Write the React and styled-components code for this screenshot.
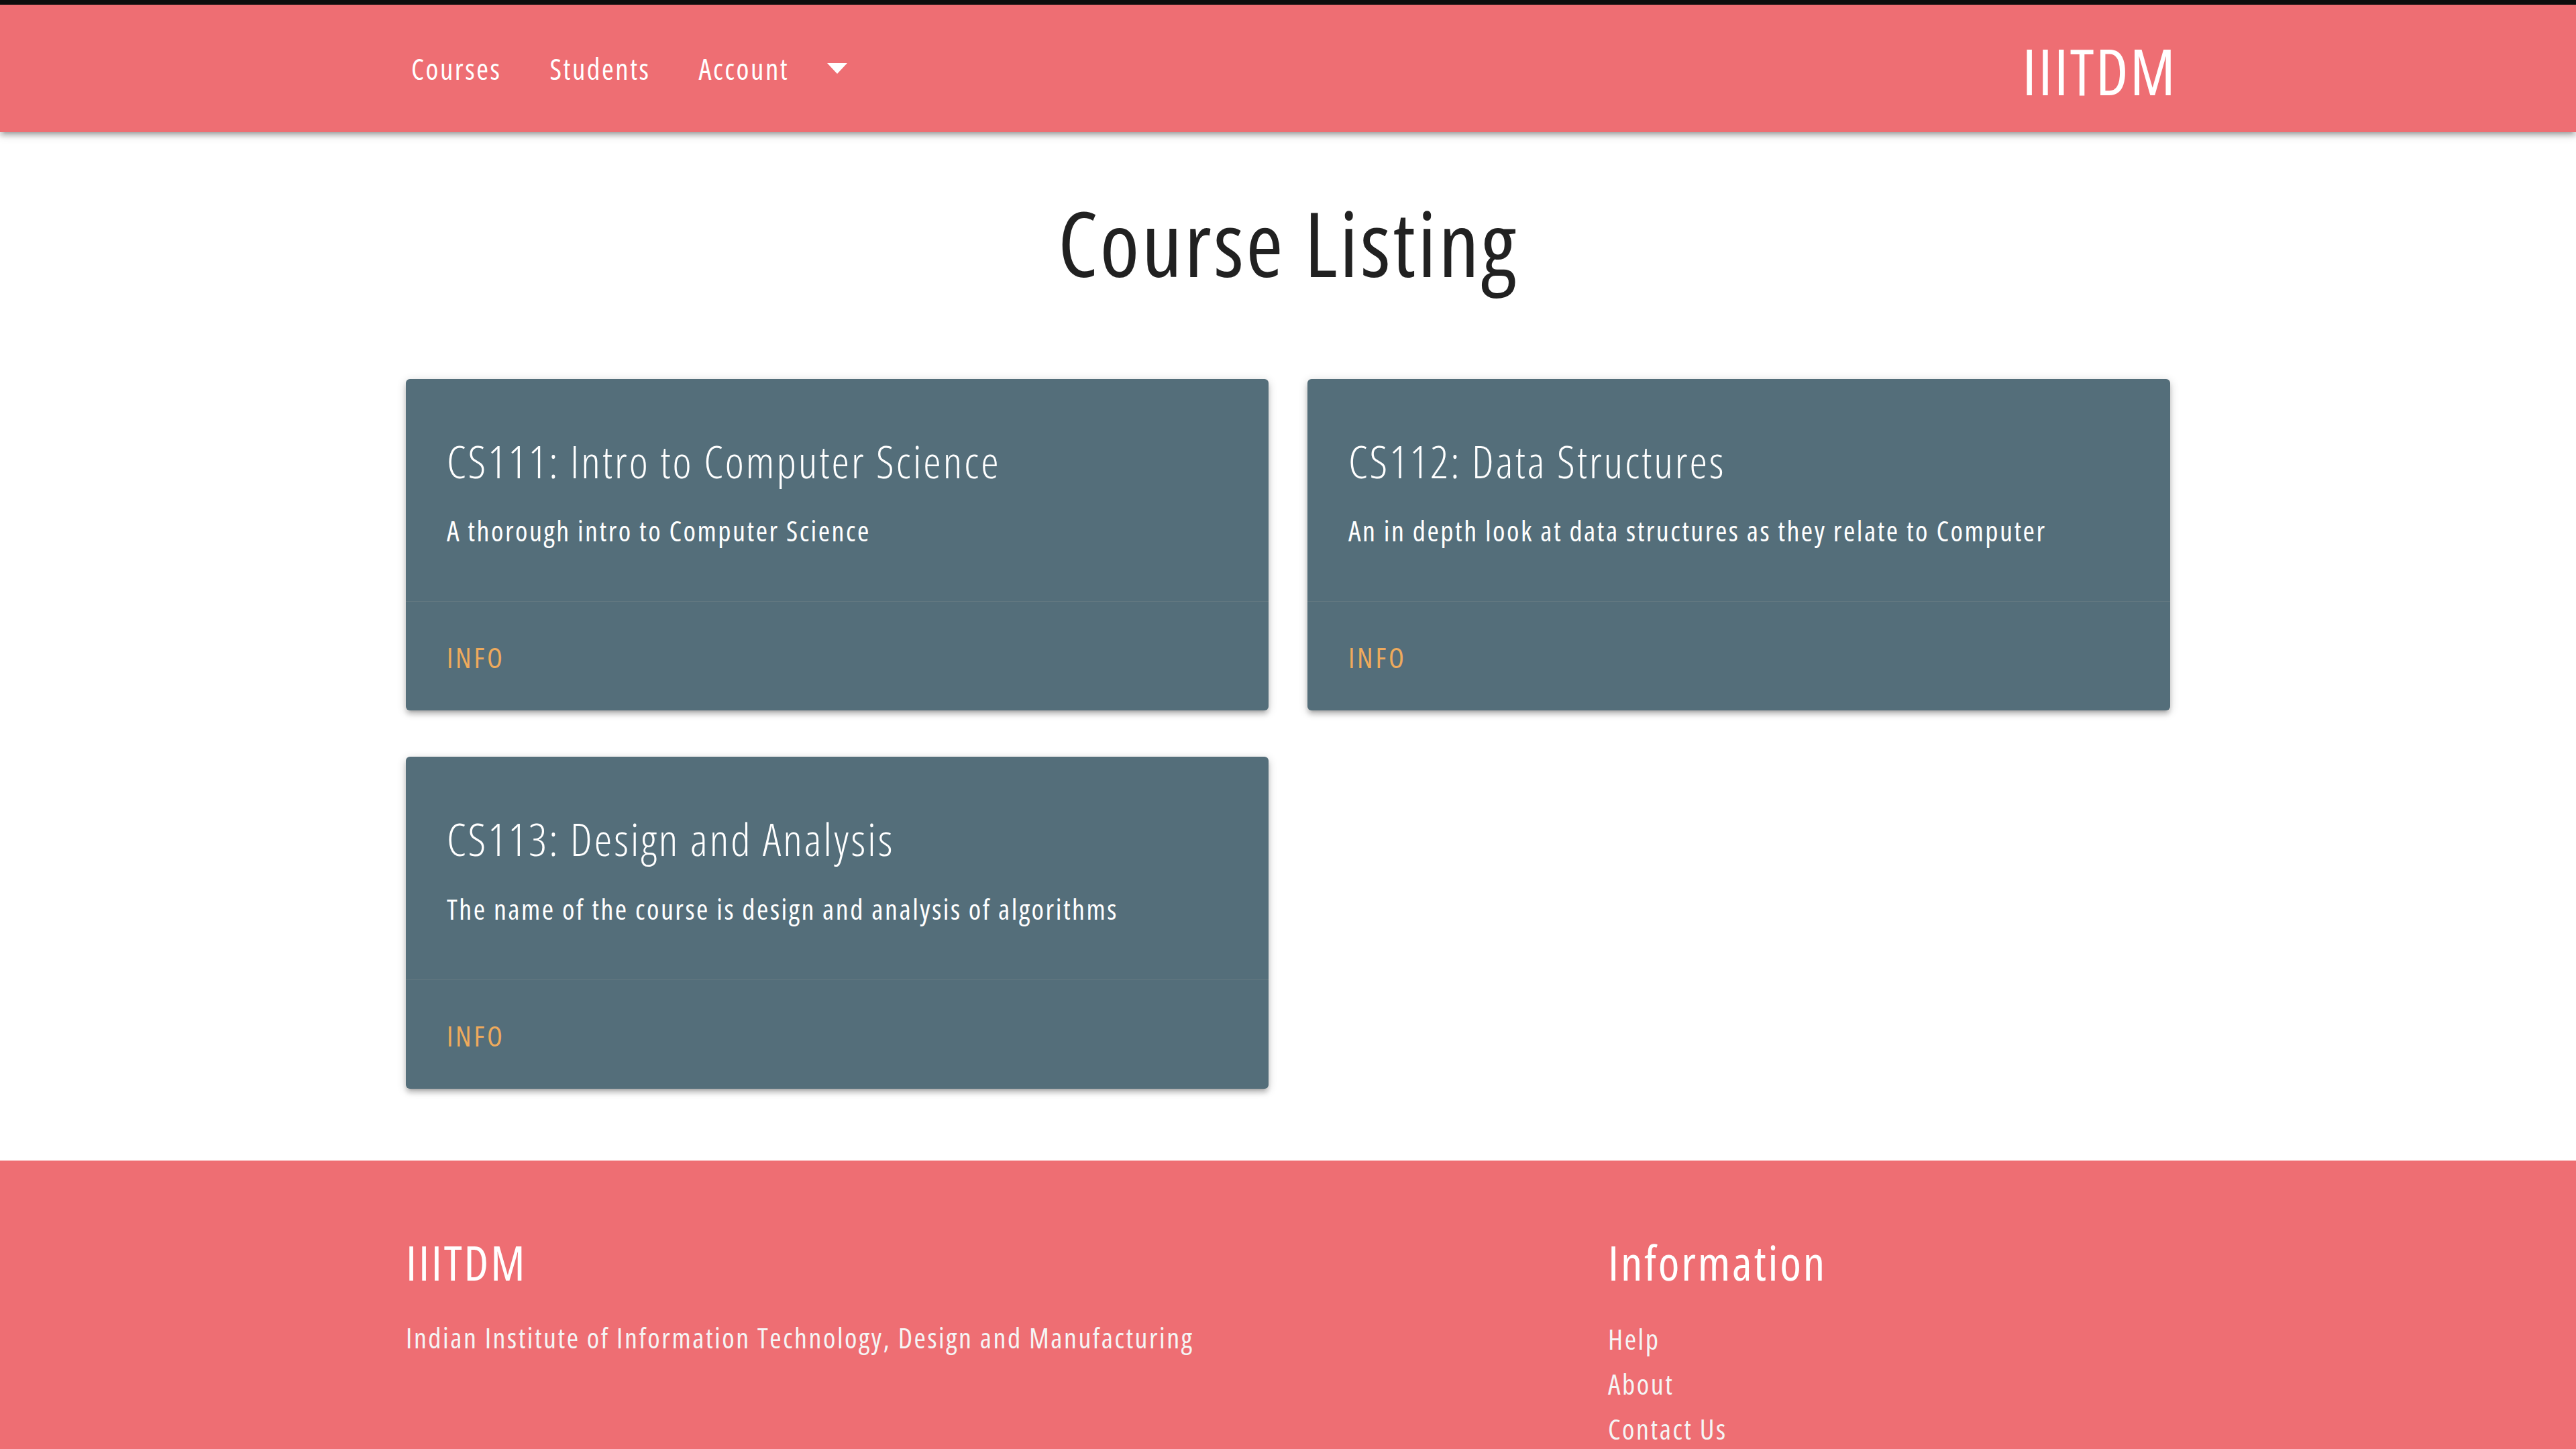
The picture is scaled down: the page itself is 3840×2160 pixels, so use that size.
import React from "react";
import styled, { createGlobalStyle } from "styled-components";

const GlobalStyle = createGlobalStyle`
  html, body {
    margin: 0;
    padding: 0;
    background: #fff;
  }
  body {
    font-family: "Open Sans", "Noto Sans", sans-serif;
    font-stretch: condensed;
    letter-spacing: 2.5px;
    color: #212121;
    border-top: 7px solid #0d0d0d;
  }
`;

const courses = [
  {
    code: "CS111",
    name: "Intro to Computer Science",
    desc: "A thorough intro to Computer Science",
  },
  {
    code: "CS112",
    name: "Data Structures",
    desc: "An in depth look at data structures as they relate to Computer",
  },
  {
    code: "CS113",
    name: "Design and Analysis",
    desc: "The name of the course is design and analysis of algorithms",
  },
];

const App = () => {
  return (
    <>
      <GlobalStyle />
      <Nav>
        <NavInner>
          <NavLinks>
            <li>
              <NavLink href="#courses">Courses</NavLink>
            </li>
            <li>
              <NavLink href="#students">Students</NavLink>
            </li>
            <Dropdown>
              <NavLink href="#account">Account</NavLink>
              <svg width="30" height="16" viewBox="0 0 30 16">
                <polygon points="0,0 30,0 15,16" fill="#fff" />
              </svg>
            </Dropdown>
          </NavLinks>
          <Brand href="#home">IIITDM</Brand>
        </NavInner>
      </Nav>

      <Main>
        <PageTitle>Course Listing</PageTitle>
        <CardGrid>
          {courses.map((c) => (
            <Card key={c.code}>
              <CardContent>
                <CardTitle>
                  {c.code}: {c.name}
                </CardTitle>
                <CardText>{c.desc}</CardText>
              </CardContent>
              <CardAction>
                <InfoLink href={"#" + c.code}>Info</InfoLink>
              </CardAction>
            </Card>
          ))}
        </CardGrid>
      </Main>

      <Footer>
        <FooterInner>
          <FooterCol $cols="1 / 7">
            <FooterHeading>IIITDM</FooterHeading>
            <FooterText>
              Indian Institute of Information Technology, Design and Manufacturing
            </FooterText>
          </FooterCol>
          <FooterCol $cols="9 / 13">
            <FooterHeading>Information</FooterHeading>
            <FooterLinks>
              <li>
                <FooterLink href="#help">Help</FooterLink>
              </li>
              <li>
                <FooterLink href="#about">About</FooterLink>
              </li>
              <li>
                <FooterLink href="#contact">Contact Us</FooterLink>
              </li>
            </FooterLinks>
          </FooterCol>
        </FooterInner>
      </Footer>
    </>
  );
};

export default App;

const Nav = styled.nav`
  position: relative;
  z-index: 2;
  height: 190px;
  background: #ee6e73;
  box-shadow: 0 6px 6px 0 rgba(0, 0, 0, 0.14), 0 8px 3px -6px rgba(0, 0, 0, 0.12),
    0 3px 14px 0 rgba(0, 0, 0, 0.2);
`;

const NavInner = styled.div`
  width: 2630px;
  height: 100%;
  margin: 0 auto;
  display: flex;
  align-items: center;
  justify-content: space-between;
`;

const NavLinks = styled.ul`
  display: flex;
  align-items: center;
  gap: 72px;
  list-style: none;
  margin: 0;
  padding: 0 0 0 8px;
`;

const Dropdown = styled.li`
  display: flex;
  align-items: center;
  gap: 57px;
  svg {
    display: block;
  }
`;

const NavLink = styled.a`
  color: #fff;
  font-size: 43px;
  line-height: 1;
  text-decoration: none;
`;

const Brand = styled.a`
  color: #fff;
  font-size: 95px;
  letter-spacing: 2.5px;
  line-height: 1;
  padding-top: 6px;
  margin-right: -10px;
  text-decoration: none;
`;

const Main = styled.main`
  width: 2630px;
  margin: 0 auto;
  padding: 84px 0 107px;
`;

const PageTitle = styled.h1`
  margin: 0 0 123px;
  text-align: center;
  font-size: 134px;
  font-weight: 400;
  letter-spacing: 3.3px;
  line-height: 1.2;
  color: #212121;
`;

const CardGrid = styled.div`
  display: grid;
  grid-template-columns: 1fr 1fr;
  column-gap: 58px;
  row-gap: 69px;
`;

const Card = styled.article`
  display: flex;
  flex-direction: column;
  background: #546e7a;
  color: #fff;
  border-radius: 6px;
  box-shadow: 0 6px 6px 0 rgba(0, 0, 0, 0.14), 0 8px 3px -6px rgba(0, 0, 0, 0.12),
    0 3px 14px 0 rgba(0, 0, 0, 0.2);
`;

const CardContent = styled.div`
  padding: 82px 61px 74px;
`;

const CardTitle = styled.h2`
  margin: 0 0 32px;
  font-size: 67px;
  font-weight: 300;
  letter-spacing: 3px;
  line-height: 1.2;
`;

const CardText = styled.p`
  margin: 0;
  font-size: 42px;
  line-height: 63px;
`;

const CardAction = styled.div`
  border-top: 1px solid rgba(160, 160, 160, 0.2);
  padding: 51px 61px 48px;
`;

const InfoLink = styled.a`
  color: #eeaa5c;
  text-transform: uppercase;
  text-decoration: none;
  font-size: 42px;
  letter-spacing: 3.7px;
  line-height: 63px;
`;

const Footer = styled.footer`
  background: #ee6e73;
  color: #fff;
  padding: 108px 0 140px;
`;

const FooterInner = styled.div`
  width: 2630px;
  margin: 0 auto;
  display: grid;
  grid-template-columns: repeat(12, 1fr);
  column-gap: 58px;
`;

const FooterCol = styled.div`
  grid-column: ${(p) => p.$cols};
`;

const FooterHeading = styled.h5`
  margin: 0 0 38px;
  font-size: 72px;
  font-weight: 400;
  letter-spacing: 2.8px;
  line-height: 1.2;
`;

const FooterText = styled.p`
  margin: 0;
  font-size: 42px;
  line-height: 63px;
  color: #f5f5f5;
`;

const FooterLinks = styled.ul`
  list-style: none;
  margin: 0;
  padding: 0;
  li {
    font-size: 42px;
    line-height: 67px;
  }
`;

const FooterLink = styled.a`
  color: #f5f5f5;
  text-decoration: none;
`;
